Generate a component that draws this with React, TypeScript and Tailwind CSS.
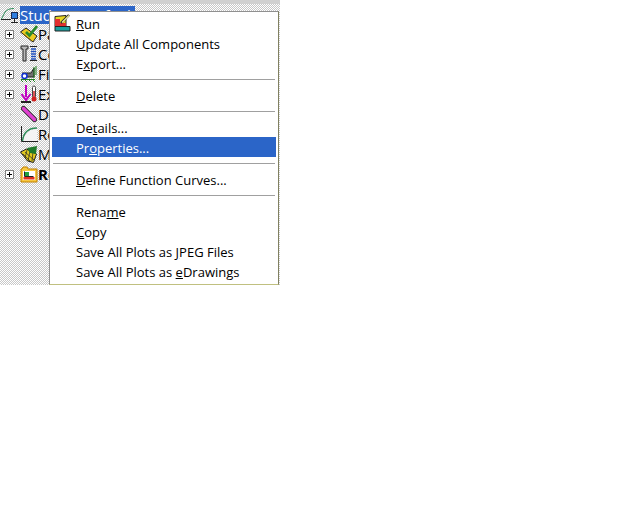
import React from "react";

function Plus() {
  return (
    <span className="relative block w-[9px] h-[9px] border border-[#808080] bg-white">
      <span className="absolute left-[1px] top-[3px] w-[5px] h-[1px] bg-black" />
      <span className="absolute left-[3px] top-[1px] w-[1px] h-[5px] bg-black" />
    </span>
  );
}

const Chart = () => (
  <svg width="18" height="18" viewBox="0 0 18 18">
    <path d="M3 16C4 9 9 4 17 4V16Z" fill="#f4f4f4" />
    <path d="M1.5 1v15.5H18" fill="none" stroke="#222" strokeWidth="1" />
    <path d="M2.5 16C3.5 8 8 3 17 3" fill="none" stroke="#2e8b57" strokeWidth="1.4" />
  </svg>
);

const StudyIcon = () => (
  <svg width="20" height="18" viewBox="0 0 20 18">
    <path d="M1.5 13L5 6C7 3.5 10 2.5 14 2.5" fill="none" stroke="#2e8b57" />
    <path d="M1 13.5H11" stroke="#222" />
    <rect x="11.5" y="6.5" width="6" height="6" fill="#2f7fe0" stroke="#1a2a50" />
    <path d="M14.5 13v3M11 16.5h7" stroke="#222" />
  </svg>
);

const Part = () => (
  <svg width="18" height="18" viewBox="0 0 18 18">
    <path d="M0.5 7L6 3l11 8-4 6z" fill="#eccb20" stroke="#222" />
    <path d="M3 9l9 7" stroke="#7a5a00" />
    <path d="M6 7l3.5 3.5L17 1" fill="none" stroke="#2a8a2a" strokeWidth="2.8" />
  </svg>
);

const Connector = () => (
  <svg width="18" height="18" viewBox="0 0 18 18">
    <path d="M1 1h7v3H6v12H3V4H1z" fill="#b8b8b8" stroke="#222" />
    <path d="M10 1.5h7M10 15.5h7" stroke="#222" />
    <path d="M11 4h5M11 6.5h5M11 9h5M11 11.5h5M11 14h5" stroke="#2050c0" strokeWidth="1.5" />
  </svg>
);

const Fixture = () => (
  <svg width="18" height="18" viewBox="0 0 18 18">
    <path d="M2 8h9l3-5v9H2" fill="#707070" stroke="#222" />
    <circle cx="4.5" cy="11" r="2.5" fill="#fff" stroke="#1030d0" strokeWidth="1.5" />
    <path d="M14 2v11M16 1v9" stroke="#208020" />
    <path d="M1 15l2 2M5 15l2 2M9 15l2 2M13 15l2 2M1 14.5h14" stroke="#208020" />
  </svg>
);

const Load = () => (
  <svg width="18" height="18" viewBox="0 0 18 18">
    <path d="M6 0v12" stroke="#c000c0" strokeWidth="2" />
    <path d="M1.5 9L6 15l4.5-6" fill="none" stroke="#c000c0" strokeWidth="2" />
    <path d="M1 17h10" stroke="#222" strokeWidth="2" />
    <rect x="12.5" y="1" width="3" height="12" rx="1.5" fill="#fff" stroke="#444" />
    <circle cx="14" cy="14" r="2.5" fill="#d02020" />
    <path d="M14 6v7" stroke="#d02020" strokeWidth="1.5" />
  </svg>
);

const Damper = () => (
  <svg width="18" height="18" viewBox="0 0 18 18">
    <path d="M3.5 3.5L14.5 14.5" stroke="#222" strokeWidth="5" strokeLinecap="round" />
    <path d="M3.5 3.5L14.5 14.5" stroke="#e040d0" strokeWidth="3.4" strokeLinecap="round" />
  </svg>
);

const Mesh = () => (
  <svg width="18" height="18" viewBox="0 0 18 18">
    <path d="M0.5 7l6-3 10 5-3 8.5-6-1.5z" fill="#e0c820" stroke="#222" />
    <path d="M3 9l8 8M5 7l9 8M7 5l-2 8M10 6l-2 10M13 7l-1 9" stroke="#222" strokeWidth="0.7" />
    <path d="M7 3l10-2-1 8-6-1z" fill="#1f7a2a" />
  </svg>
);

const Results = () => (
  <svg width="18" height="18" viewBox="0 0 18 18">
    <path d="M1 4h1l1-2h4l1 2h9v13H1z" fill="#f8c840" stroke="#c08000" />
    <rect x="3" y="6" width="12" height="9" fill="#fff" />
    <path d="M4.5 6.5v5h9" fill="none" stroke="#222" />
    <rect x="5" y="7" width="4" height="4" fill="#20a040" />
    <rect x="3.5" y="12" width="11" height="2.5" fill="#e03020" />
  </svg>
);

const RunIcon = () => (
  <svg width="18" height="18" viewBox="0 0 18 18">
    <path d="M1 2.5l11-1v11H1z" fill="#e8d820" stroke="#222" />
    <path d="M1 9h11v3H1z" fill="#e03030" />
    <path d="M1 5h5v4H1z" fill="#e03030" />
    <path d="M1 12.5h15V17H1z" fill="#18a0a0" stroke="#222" />
    <path d="M7 9l8-8" stroke="#222" strokeWidth="2.4" />
    <path d="M8 8.5l7-7" stroke="#f0f0a0" strokeWidth="1.2" />
  </svg>
);

const tree: { icon: React.ReactNode; label: string; plus: boolean; bold?: boolean }[] = [
  { icon: <Part />, label: "Parts", plus: true },
  { icon: <Connector />, label: "Connections", plus: true },
  { icon: <Fixture />, label: "Fixtures", plus: true },
  { icon: <Load />, label: "External", plus: true },
  { icon: <Damper />, label: "Dampers", plus: false },
  { icon: <Chart />, label: "Response", plus: false },
  { icon: <Mesh />, label: "Mesh", plus: false },
  { icon: <Results />, label: "Results", plus: true, bold: true },
];

type Item = { before: string; key: string; after: string; icon?: boolean; active?: boolean } | "sep";

const menu: Item[] = [
  { before: "", key: "R", after: "un", icon: true },
  { before: "", key: "U", after: "pdate All Components" },
  { before: "E", key: "x", after: "port..." },
  "sep",
  { before: "", key: "D", after: "elete" },
  "sep",
  { before: "De", key: "t", after: "ails..." },
  { before: "Pr", key: "o", after: "perties...", active: true },
  "sep",
  { before: "", key: "D", after: "efine Function Curves..." },
  "sep",
  { before: "Rena", key: "m", after: "e" },
  { before: "", key: "C", after: "opy" },
  { before: "Save All Plots as ", key: "J", after: "PEG Files" },
  { before: "Save All Plots as ", key: "e", after: "Drawings" },
];

export default function App() {
  return (
    <div className="w-[640px] h-[512px] bg-white overflow-hidden font-['Open_Sans','Noto_Sans',sans-serif] text-[13px] text-black">
      <div className="relative w-[280px] h-[285px] overflow-hidden bg-[repeating-conic-gradient(#c8c8c8_0_25%,#ffffff_0_50%)] bg-[length:2px_2px]">
        <div className="h-[4px] bg-[#d0d0d0]" />
        <div className="flex items-center h-[18px] mt-[2px]">
          <span className="w-[20px] flex justify-end shrink-0"><StudyIcon /></span>
          <span className="w-[115px] h-[18px] leading-[18px] bg-[#2b65c8] text-white whitespace-nowrap overflow-hidden text-[15px]">Study 3 (-Default-)</span>
        </div>
        <ul>
          {tree.map((t) => (
            <li key={t.label} className="flex items-center h-[20px] pl-[5px]">
              <span className="relative w-[15px] h-[20px] shrink-0 flex items-center">
                {t.plus ? (
                  <Plus />
                ) : (
                  <>
                    <span className="absolute left-[5px] top-0 h-[20px] border-l border-dotted border-[#c0c0c0]" />
                    <span className="absolute left-[5px] top-[10px] w-[10px] border-t border-dotted border-[#c0c0c0]" />
                  </>
                )}
              </span>
              <span className="w-[18px] flex justify-center shrink-0">{t.icon}</span>
              <span className={`text-[15px] whitespace-nowrap ${t.bold ? "font-bold" : ""}`}>{t.label}</span>
            </li>
          ))}
        </ul>
        <div className="absolute left-[49px] top-[11px] w-[230px] h-[274px] bg-white border border-t-[#909090] border-l-[#909090] border-r-[#808060] border-b-[#c0c080] pt-[1px] px-[2px]">
          {menu.map((m, i) =>
            m === "sep" ? (
              <div key={i} className="h-[12px] flex items-center px-[1px]">
                <div className="w-full h-[1px] bg-[#a0a0a0]" />
              </div>
            ) : (
              <div
                key={i}
                className={`relative h-[20px] leading-[22px] pl-[24px] whitespace-nowrap ${m.active ? "bg-[#2b65c8] text-white" : ""}`}
              >
                {m.icon && <span className="absolute left-[2px] top-[1px]"><RunIcon /></span>}
                {m.before}
                <span className="underline">{m.key}</span>
                {m.after}
              </div>
            )
          )}
        </div>
      </div>
    </div>
  );
}
